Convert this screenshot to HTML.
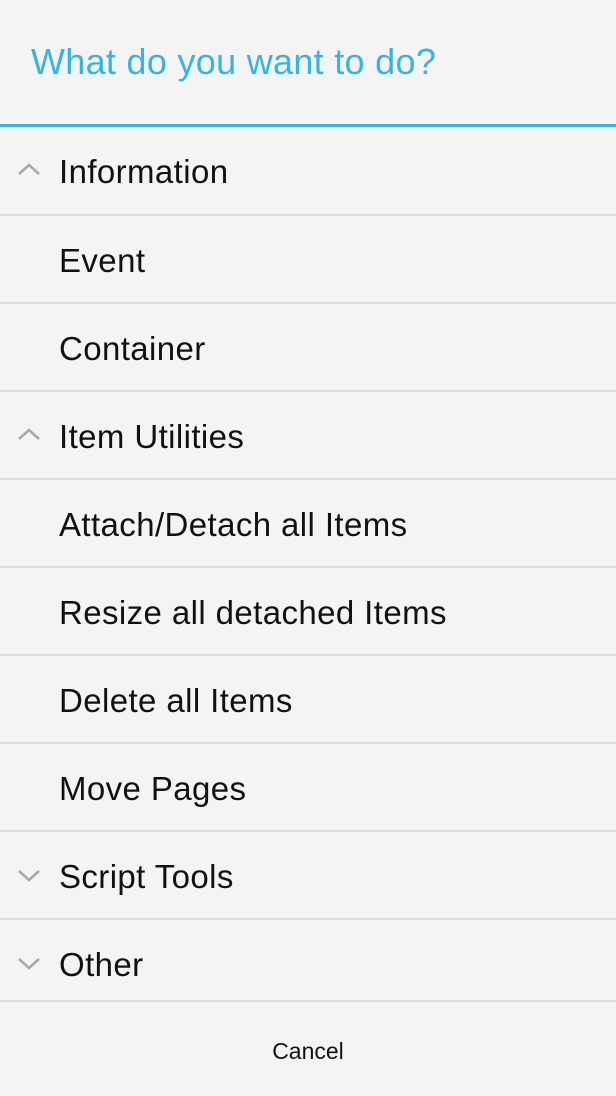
<!DOCTYPE html>
<html><head><style>
html,body{margin:0;padding:0;}
body{width:616px;height:1096px;background:#f4f4f4;font-family:"Liberation Sans",sans-serif;position:relative;overflow:hidden;}
.title{position:absolute;left:31px;top:41px;font-size:36px;color:#33b5e5;letter-spacing:0.3px;white-space:nowrap;}
.blue{position:absolute;left:0;top:124px;width:616px;height:3px;background:#33b5e5;}
.list{position:absolute;left:0;top:127px;width:616px;}
.row{height:86px;position:relative;border-bottom:2px solid #dcdcdc;font-size:33px;color:#111;letter-spacing:0.4px;}
.row span{position:absolute;left:59px;top:26px;white-space:nowrap;}
.row svg{position:absolute;left:17px;top:36px;}
.cancel{position:absolute;left:0;width:616px;top:1038px;text-align:center;font-size:23px;color:#111;}
</style></head><body>
<div class="title">What do you want to do?</div>
<div class="blue"></div>
<div class="list">
<div class="row" style="height:87px"><svg width="26" height="16" viewBox="0 0 26 16"><path d="M2 11 L12 2 L22 11" fill="none" stroke="#aaa" stroke-width="2.6"/></svg><span>Information</span></div>
<div class="row"><span>Event</span></div>
<div class="row"><span>Container</span></div>
<div class="row"><svg width="26" height="16" viewBox="0 0 26 16"><path d="M2 11 L12 2 L22 11" fill="none" stroke="#aaa" stroke-width="2.6"/></svg><span>Item Utilities</span></div>
<div class="row"><span>Attach/Detach all Items</span></div>
<div class="row"><span>Resize all detached Items</span></div>
<div class="row"><span>Delete all Items</span></div>
<div class="row"><span>Move Pages</span></div>
<div class="row"><svg width="26" height="16" viewBox="0 0 26 16"><path d="M2 3 L12 12 L22 3" fill="none" stroke="#aaa" stroke-width="2.6"/></svg><span>Script Tools</span></div>
<div class="row" style="height:80px"><svg width="26" height="16" viewBox="0 0 26 16"><path d="M2 3 L12 12 L22 3" fill="none" stroke="#aaa" stroke-width="2.6"/></svg><span>Other</span></div>
</div>
<div class="cancel">Cancel</div>
</body></html>
